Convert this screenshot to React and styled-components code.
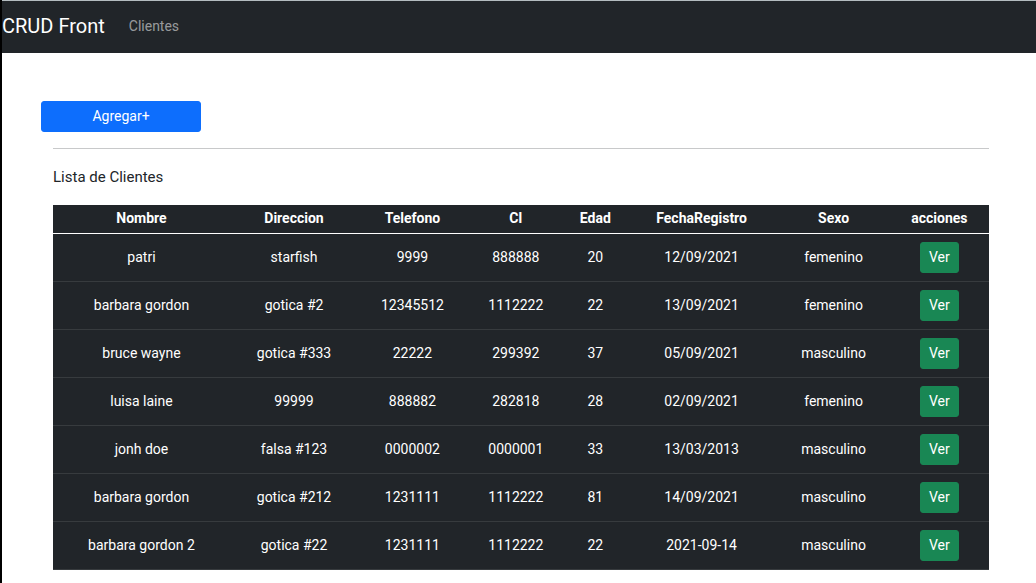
import React from "react";
import styled, { createGlobalStyle } from "styled-components";

const GlobalStyle = createGlobalStyle`
  *, *::before, *::after { box-sizing: border-box; }
  body {
    margin: 0;
    background: #fff;
    color: #212529;
    font-family: Roboto, "Liberation Sans", sans-serif;
    font-size: 14px;
    line-height: 20px;
  }
`;

const Page = styled.div`
  min-height: 100vh;
  border-left: 2px solid #000;
`;

const Navbar = styled.nav`
  display: flex;
  align-items: center;
  gap: 24px;
  height: 53px;
  padding-bottom: 2px;
  border-top: 1px solid #b4bcc0;
  background: #212529;
`;

const Brand = styled.a`
  color: #fff;
  font-size: 20px;
  line-height: 30px;
  text-decoration: none;
`;

const NavLink = styled.a`
  color: rgba(255, 255, 255, 0.55);
  text-decoration: none;
`;

const Main = styled.main`
  padding: 48px 35px 12px 39px;
`;

const Button = styled.button`
  display: inline-block;
  min-width: 39px;
  height: 31px;
  padding: 0 8px 2px;
  border: 1px solid ${({ $color }) => $color};
  border-radius: 3px;
  background: ${({ $color }) => $color};
  color: #fff;
  font: inherit;
  vertical-align: middle;
  cursor: pointer;
`;

const AddButton = styled(Button)`
  display: block;
  width: 160px;
`;

const List = styled.section`
  padding: 0 12px;
`;

const Divider = styled.hr`
  height: 1px;
  margin: 16px 0;
  border: 0;
  background: #c8c9ca;
`;

const Title = styled.h1`
  margin: 0 0 16px;
  font-size: 15px;
  font-weight: 400;
  line-height: 24px;
`;

const Table = styled.table`
  width: 100%;
  table-layout: fixed;
  border-collapse: separate;
  border-spacing: 0;
  background: #212529;
  color: #fff;
  text-align: center;
`;

const Column = styled.col`
  width: ${({ $share }) => $share}%;
`;

const HeadCell = styled.th`
  padding: 3px 4px 5px;
  border-bottom: 1px solid #fff;
  font-weight: 700;
`;

const Cell = styled.td`
  padding: 8px 4px 10px;
  border-bottom: 1px solid #373b3e;
  vertical-align: middle;
`;

const ActionCell = styled(Cell)`
  padding-bottom: 8px;
`;

const columns = [
  { name: "Nombre", share: 18.9 },
  { name: "Direccion", share: 13.7 },
  { name: "Telefono", share: 11.6 },
  { name: "CI", share: 10.5 },
  { name: "Edad", share: 6.5 },
  { name: "FechaRegistro", share: 16.2 },
  { name: "Sexo", share: 12 },
  { name: "acciones", share: 10.6 },
];

const clients = [
  ["patri", "starfish", "9999", "888888", "20", "12/09/2021", "femenino"],
  ["barbara gordon", "gotica #2", "12345512", "1112222", "22", "13/09/2021", "femenino"],
  ["bruce wayne", "gotica #333", "22222", "299392", "37", "05/09/2021", "masculino"],
  ["luisa laine", "99999", "888882", "282818", "28", "02/09/2021", "femenino"],
  ["jonh doe", "falsa #123", "0000002", "0000001", "33", "13/03/2013", "masculino"],
  ["barbara gordon", "gotica #212", "1231111", "1112222", "81", "14/09/2021", "masculino"],
  ["barbara gordon 2", "gotica #22", "1231111", "1112222", "22", "2021-09-14", "masculino"],
];

export default function App() {
  return (
    <>
      <GlobalStyle />
      <Page>
        <Navbar>
          <Brand href="#">CRUD Front</Brand>
          <NavLink href="#clientes">Clientes</NavLink>
        </Navbar>
        <Main>
          <AddButton type="button" $color="#0d6efd">Agregar+</AddButton>
          <List id="clientes">
            <Divider />
            <Title>Lista de Clientes</Title>
            <Table>
              <colgroup>
                {columns.map((c) => <Column key={c.name} $share={c.share} />)}
              </colgroup>
              <thead>
                <tr>
                  {columns.map((c) => <HeadCell key={c.name} scope="col">{c.name}</HeadCell>)}
                </tr>
              </thead>
              <tbody>
                {clients.map((client, row) => (
                  <tr key={row}>
                    {client.map((value, i) => <Cell key={i}>{value}</Cell>)}
                    <ActionCell>
                      <Button type="button" $color="#198754">Ver</Button>
                    </ActionCell>
                  </tr>
                ))}
              </tbody>
            </Table>
          </List>
        </Main>
      </Page>
    </>
  );
}
